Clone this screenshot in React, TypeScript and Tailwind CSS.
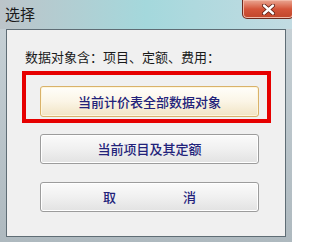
import React from "react";

const cjk = { fontFamily: '"Noto Sans CJK SC", "Noto Sans", sans-serif' };

function WinButton({ children, hot = false }: { children: React.ReactNode; hot?: boolean }) {
  return (
    <button
      className={
        hot
          ? "flex h-[31px] w-[219px] items-center justify-center rounded-[3px] border border-[#d9b26a] bg-gradient-to-b from-[#fffefa] via-[#fbf5e6] to-[#f1e4c4] text-[13px] font-medium text-[#22227a] shadow-[inset_0_0_0_1px_#fff6dc]"
          : "flex h-[30px] w-[219px] items-center justify-center rounded-[3px] border border-[#9c9c9c] bg-gradient-to-b from-[#fbfbfb] via-[#f0f0f0] to-[#e2e2e2] text-[13px] font-medium text-[#22227a] shadow-[inset_0_0_0_1px_#ffffff]"
      }
      style={cjk}
    >
      {children}
    </button>
  );
}

export default function App() {
  return (
    <div className="relative flex h-[242px] w-[292px] flex-col overflow-hidden bg-gradient-to-b from-[#c9d3d8] to-[#aeb9bf]" style={cjk}>
      {/* title bar */}
      <div className="flex h-[29px] shrink-0 items-start justify-between bg-gradient-to-r from-[#bcc4c9] via-[#a4d8dc] to-[#c2dbe2]">
        <span className="pl-[5px] pt-[5px] text-[15px] leading-[18px] text-[#1a1a1a]">选择</span>
        <div className="-mr-[2px] flex h-[19px] w-[52px] items-center justify-center rounded-b-[5px] border border-t-0 border-[#6e2b1e] bg-gradient-to-b from-[#e9a692] via-[#d4553a] to-[#c0462a] shadow-[inset_0_0_0_1px_#f2b8a6]">
          <svg width="13" height="11" viewBox="0 0 13 11">
            <path d="M2 1.5 L11 9.5 M11 1.5 L2 9.5" stroke="#5a1a10" strokeWidth="4" strokeLinecap="round" />
            <path d="M2 1.5 L11 9.5 M11 1.5 L2 9.5" stroke="#ffffff" strokeWidth="2.4" strokeLinecap="round" />
          </svg>
        </div>
      </div>

      {/* frame + client */}
      <div className="flex flex-1 px-[6px] pb-[5px]">
        <div className="relative flex flex-1 flex-col border border-[#5f6d75] bg-[#f0f0f0] pl-[18px] pt-[19px]">
          <span className="text-[13px] leading-[16px] text-[#1a1a1a]">数据对象含：项目、定额、费用：</span>

          <div className="mt-[21px] flex flex-col gap-[17px] pl-[15px]">
            <WinButton hot>当前计价表全部数据对象</WinButton>
            <WinButton>当前项目及其定额</WinButton>
            <div className="mt-[1px]">
              <WinButton>
                <span className="flex gap-[67px]">
                  <span>取</span>
                  <span>消</span>
                </span>
              </WinButton>
            </div>
          </div>

          {/* red highlight box */}
          <div className="absolute left-[15px] top-[41px] h-[52px] w-[249px] border-[4px] border-[#e60000]" />
        </div>
      </div>
    </div>
  );
}
